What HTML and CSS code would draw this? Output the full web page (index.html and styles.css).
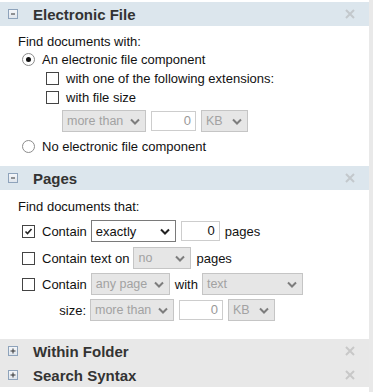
FILE: index.html
```html
<!DOCTYPE html>
<html lang="en">
<head>
    <meta charset="UTF-8">
    <title>Search Options</title>
    <link rel="stylesheet" href="styles.css">
</head>
<body>
    <div class="frame">
        <!-- Electronic File -->
        <div class="section">
            <div class="sec-head">
                <span class="toggle"><svg width="8" height="8" viewBox="0 0 8 8"><path d="M2 4h4" stroke="#333" stroke-width="1"/></svg></span>
                <span class="title">Electronic File</span>
                <span class="close"><svg width="10" height="10" viewBox="0 0 10 10"><path d="M1 1L9 9M9 1L1 9" stroke="#c3c8cc" stroke-width="2"/></svg></span>
            </div>
            <div class="sec-body">
                <div class="line">Find documents with:</div>
                <div class="opt"><span class="radio on"></span>An electronic file component</div>
                <div class="sub">
                    <div class="opt"><span class="cb"></span>with one of the following extensions:</div>
                    <div class="opt"><span class="cb"></span>with file size</div>
                    <div class="ctrls">
                        <span class="sel w84">more than<svg width="10" height="7" viewBox="0 0 10 7"><path d="M1 1.5L5 5.5L9 1.5" stroke="#7d7d7d" stroke-width="2" fill="none"/></svg></span>
                        <span class="num w45">0</span>
                        <span class="sel w47">KB<svg width="10" height="7" viewBox="0 0 10 7"><path d="M1 1.5L5 5.5L9 1.5" stroke="#7d7d7d" stroke-width="2" fill="none"/></svg></span>
                    </div>
                </div>
                <div class="opt last"><span class="radio"></span>No electronic file component</div>
            </div>
        </div>

        <!-- Pages -->
        <div class="section">
            <div class="sec-head">
                <span class="toggle"><svg width="8" height="8" viewBox="0 0 8 8"><path d="M2 4h4" stroke="#333" stroke-width="1"/></svg></span>
                <span class="title">Pages</span>
                <span class="close"><svg width="10" height="10" viewBox="0 0 10 10"><path d="M1 1L9 9M9 1L1 9" stroke="#c3c8cc" stroke-width="2"/></svg></span>
            </div>
            <div class="sec-body pages">
                <div class="line">Find documents that:</div>
                <div class="prow">
                    <span class="cb checked"><svg width="11" height="11" viewBox="0 0 11 11"><path d="M2.5 5.5L4.5 7.5L8.5 3" stroke="#222" stroke-width="1.6" fill="none"/></svg></span>
                    <span class="lbl">Contain</span>
                    <span class="sel on w85">exactly<svg width="10" height="7" viewBox="0 0 10 7"><path d="M1 1.5L5 5.5L9 1.5" stroke="#222" stroke-width="2" fill="none"/></svg></span>
                    <span class="num on w39">0</span>
                    <span class="after">pages</span>
                </div>
                <div class="prow second">
                    <span class="cb"></span>
                    <span class="lbl">Contain text on</span>
                    <span class="sel w58">no<svg width="10" height="7" viewBox="0 0 10 7"><path d="M1 1.5L5 5.5L9 1.5" stroke="#7d7d7d" stroke-width="2" fill="none"/></svg></span>
                    <span class="after">pages</span>
                </div>
                <div class="prow">
                    <span class="cb"></span>
                    <span class="lbl">Contain</span>
                    <span class="sel w79">any page<svg width="10" height="7" viewBox="0 0 10 7"><path d="M1 1.5L5 5.5L9 1.5" stroke="#7d7d7d" stroke-width="2" fill="none"/></svg></span>
                    <span class="after">with</span>
                    <span class="sel w101">text<svg width="10" height="7" viewBox="0 0 10 7"><path d="M1 1.5L5 5.5L9 1.5" stroke="#7d7d7d" stroke-width="2" fill="none"/></svg></span>
                </div>
                <div class="prow">
                    <span class="size-lbl">size:</span>
                    <span class="sel w84">more than<svg width="10" height="7" viewBox="0 0 10 7"><path d="M1 1.5L5 5.5L9 1.5" stroke="#7d7d7d" stroke-width="2" fill="none"/></svg></span>
                    <span class="num w44">0</span>
                    <span class="sel w47">KB<svg width="10" height="7" viewBox="0 0 10 7"><path d="M1 1.5L5 5.5L9 1.5" stroke="#7d7d7d" stroke-width="2" fill="none"/></svg></span>
                </div>
            </div>
        </div>

        <!-- Within Folder -->
        <div class="section closed">
            <div class="sec-head">
                <span class="toggle"><svg width="8" height="8" viewBox="0 0 8 8"><path d="M1.5 4h5M4 1.5v5" stroke="#333" stroke-width="1"/></svg></span>
                <span class="title">Within Folder</span>
                <span class="close"><svg width="10" height="10" viewBox="0 0 10 10"><path d="M1 1L9 9M9 1L1 9" stroke="#c8c8c8" stroke-width="2"/></svg></span>
            </div>
        </div>

        <!-- Search Syntax -->
        <div class="section closed">
            <div class="sec-head">
                <span class="toggle"><svg width="8" height="8" viewBox="0 0 8 8"><path d="M1.5 4h5M4 1.5v5" stroke="#333" stroke-width="1"/></svg></span>
                <span class="title">Search Syntax</span>
                <span class="close"><svg width="10" height="10" viewBox="0 0 10 10"><path d="M1 1L9 9M9 1L1 9" stroke="#c8c8c8" stroke-width="2"/></svg></span>
            </div>
        </div>
    </div>
</body>
</html>
```

FILE: styles.css
```css
body {
    margin: 0;
    font-family: "Liberation Sans", Arial, sans-serif;
    font-size: 13px;
    color: #111;
    background-color: white;
}
.frame {
    width: 373px;
    min-height: 392px;
    box-sizing: border-box;
    border-right: 4px solid #e9e9e9;
    padding-top: 2px;
}
.sec-head {
    height: 24px;
    display: flex;
    align-items: center;
    padding: 0 14px 0 8px;
    background-color: #dce6ed;
}
.closed .sec-head {
    background-color: #e8e8e8;
}
.toggle {
    width: 10px;
    height: 10px;
    box-sizing: border-box;
    border: 1px solid #8ea3bb;
    background: linear-gradient(#f4f6f9, #dfe5ec);
    display: flex;
    align-items: center;
    justify-content: center;
}
.toggle svg {
    display: block;
}
.title {
    flex: 1;
    margin-left: 15px;
    font-size: 15px;
    font-weight: bold;
    color: #333;
}
.close svg {
    display: block;
}
.sec-body {
    padding: 8px 0 10px 18px;
}
.sec-body.pages {
    padding-top: 9px;
    padding-bottom: 18px;
}
.line {
    height: 16px;
    line-height: 16px;
}
.opt {
    display: flex;
    align-items: center;
    height: 19px;
}
.opt.last {
    margin-top: 5px;
}
.radio {
    width: 13px;
    height: 13px;
    box-sizing: border-box;
    border: 1px solid #8c8c8c;
    border-radius: 50%;
    margin: 0 7px 0 4px;
    display: flex;
    align-items: center;
    justify-content: center;
}
.radio.on::after {
    content: "";
    width: 5px;
    height: 5px;
    border-radius: 50%;
    background-color: #111;
}
.cb {
    width: 13px;
    height: 13px;
    box-sizing: border-box;
    border: 1px solid #444;
    background-color: white;
    margin-right: 7px;
    display: flex;
    align-items: center;
    justify-content: center;
}
.sub {
    padding-left: 28px;
}
.ctrls {
    display: flex;
    align-items: center;
    margin: 3px 0 0 16px;
}
.sel {
    height: 22px;
    box-sizing: border-box;
    border: 1px solid #c5c5c5;
    background-color: #e6e6e6;
    color: #a2a2a2;
    font-size: 12.5px;
    padding: 0 5px 0 4px;
    display: flex;
    align-items: center;
    justify-content: space-between;
}
.sel svg {
    flex-shrink: 0;
}
.sel.on {
    border-color: #7a7a7a;
    background-color: white;
    color: #111;
    font-size: 13px;
}
.num {
    height: 20px;
    line-height: 18px;
    box-sizing: border-box;
    border: 1px solid #cdcdcd;
    background-color: white;
    color: #999;
    text-align: right;
    padding-right: 4px;
    margin: 0 5px;
}
.num.on {
    color: #111;
}
.w39 { width: 39px; }
.w44 { width: 44px; }
.w45 { width: 45px; }
.w47 { width: 47px; }
.w58 { width: 58px; }
.w79 { width: 79px; }
.w84 { width: 84px; }
.w85 { width: 85px; }
.w101 { width: 101px; }
.prow {
    display: flex;
    align-items: center;
    height: 22px;
    margin-top: 4px;
    padding-left: 4px;
}
.line + .prow,
.prow.second {
    margin-top: 5px;
}
.lbl {
    margin-right: 4px;
}
.after {
    margin-right: 4px;
}
.prow .sel + .after {
    margin-left: 5px;
}
.size-lbl {
    width: 64px;
    text-align: right;
    margin-right: 4px;
}
```
